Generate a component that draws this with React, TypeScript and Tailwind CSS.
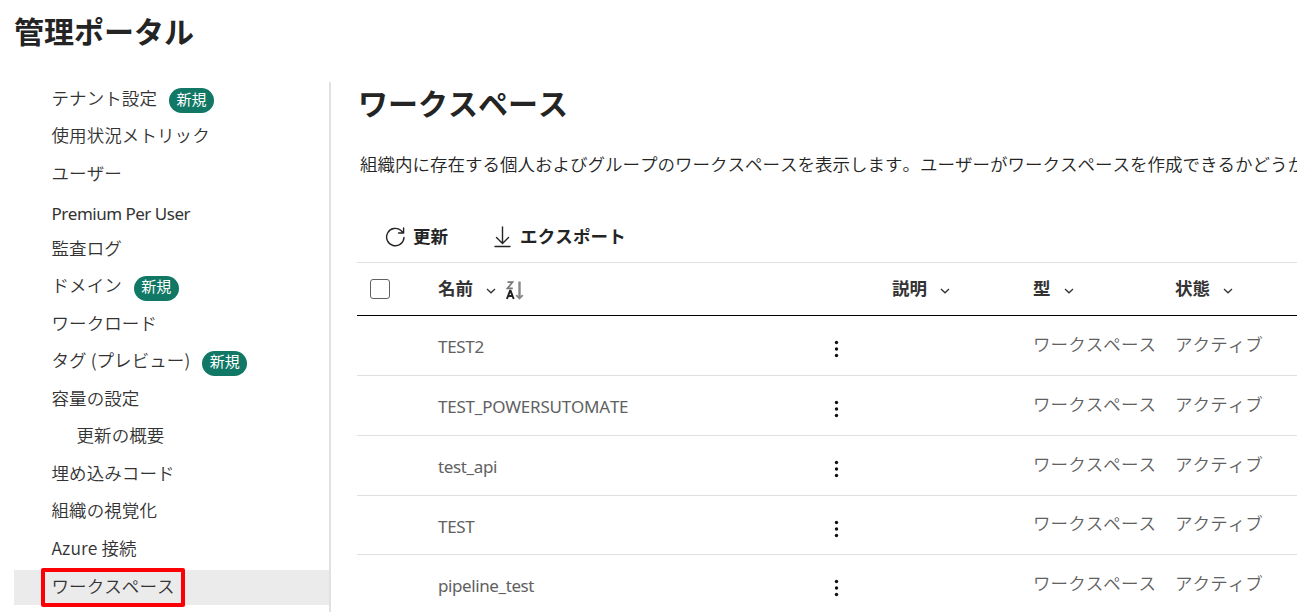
import React from "react";

type NavItem = { label: string; badge?: boolean; indent?: boolean; selected?: boolean; latin?: boolean };

const navItems: NavItem[] = [
  { label: "テナント設定", badge: true },
  { label: "使用状況メトリック" },
  { label: "ユーザー" },
  { label: "Premium Per User", latin: true },
  { label: "監査ログ" },
  { label: "ドメイン", badge: true },
  { label: "ワークロード" },
  { label: "タグ (プレビュー)", badge: true },
  { label: "容量の設定" },
  { label: "更新の概要", indent: true },
  { label: "埋め込みコード" },
  { label: "組織の視覚化" },
  { label: "Azure 接続" },
  { label: "ワークスペース", selected: true },
];

const rows = [
  { name: "TEST2", spacing: "tracking-[-0.3px]", height: "h-[60px]" },
  { name: "TEST_POWERSUTOMATE", spacing: "tracking-[-0.22px]", height: "h-[60px]" },
  { name: "test_api", spacing: "tracking-[-0.35px]", height: "h-[60px]" },
  { name: "TEST", spacing: "tracking-[-0.3px]", height: "h-[59px]" },
  { name: "pipeline_test", spacing: "tracking-[-0.4px]", height: "h-[60px]" },
];

function Chevron() {
  return (
    <svg className="mt-[4px] shrink-0" width="10" height="6" viewBox="0 0 10 6" fill="none" stroke="#333" strokeWidth="1.3">
      <path d="M1 1l4 3.8L9 1" />
    </svg>
  );
}

function SortIcon() {
  return (
    <svg className="ml-[10px] mt-[3px]" width="18" height="19" viewBox="0 0 18 19" fill="none">
      <path d="M1.5 1.2h5L1.5 7.3h5.3" stroke="#777" strokeWidth="1.7" />
      <path d="M.9 18L4 9.8h.6L7.7 18M2.2 15h4.2" stroke="#222" strokeWidth="1.9" />
      <path d="M13.5.5v16" stroke="#8a8686" strokeWidth="2.4" />
      <path d="M10.2 14.2l3.3 3.2 3.3-3.2" stroke="#8a8686" strokeWidth="1.8" />
    </svg>
  );
}

function Header({ label }: { label: string }) {
  return (
    <div className="flex items-center gap-[13px]">
      <span className="pb-[2px]">{label}</span>
      <Chevron />
    </div>
  );
}

export default function App() {
  return (
    <div className="flex h-[612px] w-[1297px] flex-col overflow-hidden bg-white font-['Noto_Sans','Noto_Sans_CJK_JP',sans-serif] text-[17.5px] text-[#333] [font-kerning:none]">
      <h1 className="h-[82px] shrink-0 pl-[14px] pt-[10px] text-[30px] leading-[44px] font-bold text-[#242424]">管理ポータル</h1>
      <div className="flex min-h-0 flex-1">
        <nav className="flex w-[317px] shrink-0 flex-col gap-[2.5px] border-r-2 border-[#e1e1e1] ml-[14px] pt-[0.5px]">
          {navItems.map((item) => (
            <div
              key={item.label}
              className={`flex h-[35px] shrink-0 items-center ${item.selected ? "bg-[#ebebeb]" : ""} ${item.indent ? "pl-[62.5px]" : item.selected ? "pl-[26.5px]" : "pl-[37.5px]"}`}
            >
              {item.selected ? (
                <span className="-my-[2px] flex h-[39px] w-[144px] items-center rounded-[2px] border-4 border-[#fc0006] pl-[7px] pb-[3px] font-['Noto_Sans_CJK_JP',sans-serif] font-[350] whitespace-nowrap tracking-[0.08px]">
                  {item.label}
                </span>
              ) : (
                <span className={item.latin ? "pt-[3px] text-[17px] tracking-[-0.5px]" : "pb-[4px] font-['Noto_Sans_CJK_JP',sans-serif] font-[350] whitespace-nowrap tracking-[0.08px]"}>
                  {item.label}
                </span>
              )}
              {item.badge && (
                <span className="ml-[12px] mt-px flex h-[25px] w-[45px] items-center justify-center rounded-full bg-[#117865] pb-[3px] font-['Noto_Sans_CJK_JP',sans-serif] text-[15px] text-white">
                  新規
                </span>
              )}
            </div>
          ))}
        </nav>
        <main className="flex min-w-0 flex-1 flex-col pl-[26px] text-[#242424]">
          <h2 className="h-[64px] shrink-0 pl-px text-[30px] leading-[44px] font-bold">ワークスペース</h2>
          <p className="h-[68px] shrink-0 overflow-hidden pl-[3px] font-['Noto_Sans_CJK_JP',sans-serif] font-[350] leading-[36px] whitespace-nowrap">
            組織内に存在する個人およびグループのワークスペースを表示します。ユーザーがワークスペースを作成できるかどうか
          </p>
          <div className="flex h-[49px] shrink-0 items-center border-b border-[#e0e0e0] pl-[28px] pb-[3px] font-bold">
            <svg width="20" height="20" viewBox="0 0 20 20" fill="none" stroke="#242424" strokeWidth="1.4" strokeLinecap="round" strokeLinejoin="round">
              <path d="M19 10.5a8.7 8.7 0 1 1-3-7L18.4 6M18.6 1v5h-5" />
            </svg>
            <span className="ml-[8px]">更新</span>
            <svg className="ml-[46px]" width="17" height="22" viewBox="0 0 17 22" fill="none" stroke="#242424" strokeWidth="1.4" strokeLinecap="round" strokeLinejoin="round">
              <path d="M8.5 1v16M2.5 11.5l6 6 6-6M1 20.5h15" />
            </svg>
            <span className="ml-[9px] tracking-[0.15px]">エクスポート</span>
          </div>
          <div className="grid h-[53px] shrink-0 grid-cols-[81px_454px_141px_142px_1fr] items-center border-b border-black font-bold text-[#333]">
            <span className="ml-[13px] h-[20px] w-[20px] rounded-[3px] border border-[#616161]" />
            <div className="flex items-center">
              <Header label="名前" />
              <SortIcon />
            </div>
            <Header label="説明" />
            <Header label="型" />
            <Header label="状態" />
          </div>
          {rows.map((row) => (
            <div key={row.name} className={`grid ${row.height} shrink-0 grid-cols-[81px_395px_200px_142px_1fr] items-center border-b border-[#e0e0e0] text-[#616161]`}>
              <span />
              <span className={`pt-[3px] text-[17px] ${row.spacing}`}>{row.name}</span>
              <svg className="mt-[7px]" width="6" height="18" viewBox="0 0 6 18" fill="#111">
                <circle cx="3.5" cy="2.5" r="1.7" />
                <circle cx="3.5" cy="9" r="1.7" />
                <circle cx="3.5" cy="15.5" r="1.7" />
              </svg>
              <span className="pb-[3px] font-['Noto_Sans_CJK_JP',sans-serif] font-[350] tracking-[0.08px]">ワークスペース</span>
              <span className="pb-[3px] font-['Noto_Sans_CJK_JP',sans-serif] font-[350] tracking-[0.08px]">アクティブ</span>
            </div>
          ))}
        </main>
      </div>
    </div>
  );
}
